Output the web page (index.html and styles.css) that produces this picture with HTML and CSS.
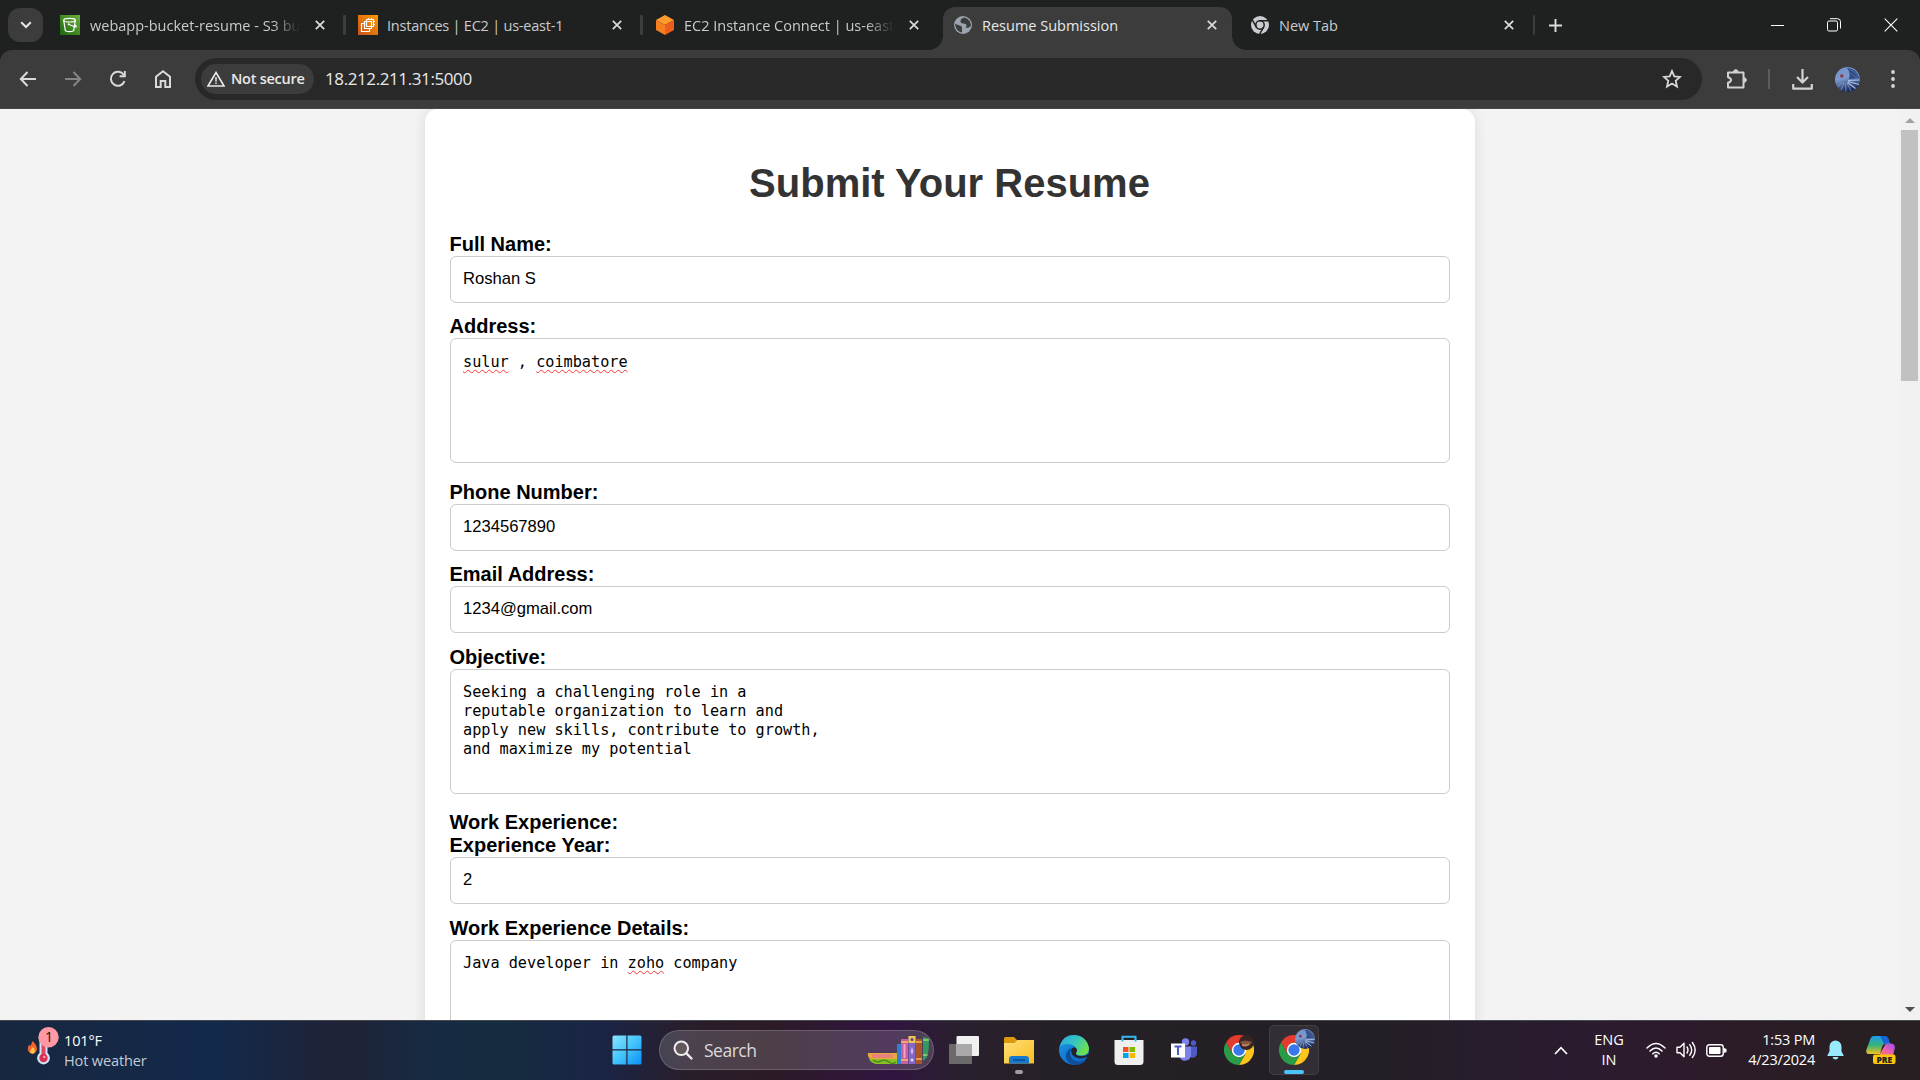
FILE: index.html
```html
<!DOCTYPE html>
<html lang="en">
<head>
<meta charset="utf-8">
<title>Resume Submission</title>
<link rel="stylesheet" href="styles.css">
</head>
<body>
<svg class="defs" width="0" height="0" aria-hidden="true">
  <defs>
    <symbol id="x" viewBox="0 0 10 10"><path d="M.8.8l8.4 8.4M9.200.8L.8 9.200" stroke="currentColor" stroke-width="1.7" fill="none"/></symbol>
    <linearGradient id="gGreen" x1="0" y1="1" x2="1" y2="0"><stop offset="0" stop-color="#1b660f"/><stop offset="1" stop-color="#6cae3e"/></linearGradient>
    <linearGradient id="gOrange" x1="0" y1="1" x2="1" y2="0"><stop offset="0" stop-color="#c8511b"/><stop offset="1" stop-color="#f90"/></linearGradient>
    <linearGradient id="gWin" x1="0" y1="0" x2="1" y2="1"><stop offset="0" stop-color="#8be5ff"/><stop offset=".5" stop-color="#43c4fb"/><stop offset="1" stop-color="#0a8ff5"/></linearGradient>
    <linearGradient id="gFolder" x1="0" y1="0" x2="1" y2="1"><stop offset="0" stop-color="#ffe07a"/><stop offset="1" stop-color="#f9bd1f"/></linearGradient>
    <linearGradient id="gEdgeTop" x1="0" y1="0" x2="1" y2=".5"><stop offset="0" stop-color="#2aa7e0"/><stop offset=".55" stop-color="#35c5c0"/><stop offset="1" stop-color="#6ce04e"/></linearGradient>
    <linearGradient id="gEdgeLeft" x1="0" y1="0" x2=".6" y2="1"><stop offset="0" stop-color="#1ba0e6"/><stop offset="1" stop-color="#0a66c8"/></linearGradient>
    <linearGradient id="gBird" x1="0" y1="0" x2=".3" y2="1"><stop offset="0" stop-color="#6f8fc4"/><stop offset=".5" stop-color="#7d9bd0"/><stop offset="1" stop-color="#1c2c5c"/></linearGradient>
    <linearGradient id="gPilotA" x1="0" y1="0" x2="0" y2="1"><stop offset="0" stop-color="#1c9df0"/><stop offset=".5" stop-color="#35b27c"/><stop offset="1" stop-color="#f2c21b"/></linearGradient>
    <linearGradient id="gPilotB" x1="1" y1="0" x2=".2" y2="1"><stop offset="0" stop-color="#9b4df0"/><stop offset=".6" stop-color="#f063a8"/><stop offset="1" stop-color="#f7834d"/></linearGradient>
    <symbol id="chrome" viewBox="0 0 30 30">
      <path d="M15 7.500h13A15 15 0 0 1 15 30l6.500-11.200z" fill="#fdc51c"/>
      <path d="M2 7.500A15 15 0 0 1 28 7.500H15L8.500 18.700z" fill="#e33b2e"/>
      <path d="M2 7.500L8.500 18.700 15 22.500l6.500-3.700L15 30A15 15 0 0 1 2 7.500z" fill="#2a9c48"/>
      <circle cx="15" cy="15" r="7.200" fill="#fff"/><circle cx="15" cy="15" r="5.700" fill="#3878ea"/>
    </symbol>
    <symbol id="bird" viewBox="0 0 25 25">
      <circle cx="12.500" cy="12.500" r="12.500" fill="url(#gBird)"/>
      <path d="M12 1a11.500 11.500 0 0 1 12 10l-10 1q2-6-2-11z" fill="#2e4a80"/>
      <path d="M14 2q7 3 9 8M15 6l7 5" stroke="#5577ae" stroke-width=".8" fill="none"/>
      <path d="M13 13.500l11.500-.5M13 14.500l11 3M12.500 15.500l8 6" stroke="#a9c2ea" stroke-width="1.100"/>
      <path d="M12 16l4 8M10.500 16.500l.5 8M9 16l-3 7M7.500 15.500l-5 4" stroke="#8ba6d6" stroke-width=".7"/>
      <circle cx="6.800" cy="9" r="1.700" fill="#8f3840"/>
    </symbol>
  </defs>
</svg>

<header class="tabstrip">
  <button class="tab-search"><svg width="12" height="8" viewBox="0 0 12 8"><path d="M1.200 1.200L6 6l4.800-4.800" fill="none" stroke="#e6e6e6" stroke-width="2"/></svg></button>
  <div class="tab tab-first">
    <svg class="fav" viewBox="0 0 20 20"><path fill="url(#gGreen)" d="M0 0h20v20H0z"/><g fill="none" stroke="#fff" stroke-width="1.200"><ellipse cx="9.500" cy="5.200" rx="5.800" ry="1.800"/><path d="M3.700 5.200l1.600 10.500q4.200 1.800 8.400 0l1.600-10.500M8.500 9.200l6 2.500q2.500.8 1.500-.8l-1.500-1.700"/></g><circle cx="8.700" cy="9.300" r="1" fill="#fff"/></svg>
    <span class="title fade">webapp-bucket-resume - S3 bu</span><svg class="close"><use href="#x"/></svg>
  </div>
  <i class="sep"></i>
  <div class="tab">
    <svg class="fav" viewBox="0 0 20 20"><path fill="url(#gOrange)" d="M0 0h20v20H0z"/><g fill="none" stroke="#fff" stroke-width="1.200"><rect x="8.500" y="4.500" width="7" height="7" rx=".5"/><path d="M6.500 8.500h-3v8h8v-3M6.500 6.500h7v7h-7zM10.500 4.500v-1.500M13.500 4.500v-1.500M15.500 6.500h1.500M15.500 9.500h1.500"/></g></svg>
    <span class="title tight">Instances | EC2 | us-east-1</span><svg class="close"><use href="#x"/></svg>
  </div>
  <i class="sep"></i>
  <div class="tab">
    <svg class="fav" viewBox="0 0 20 20"><path fill="#ff9a2e" d="M10 0l9 5-9 5-9-5z"/><path fill="#f57f20" d="M1 5l9 5v10l-9-5z"/><path fill="#ea5f1b" d="M19 5l-9 5v10l9-5z"/></svg>
    <span class="title fade">EC2 Instance Connect | us-east</span><svg class="close"><use href="#x"/></svg>
  </div>
  <div class="tab active">
    <svg class="fav" viewBox="0 0 20 20"><circle cx="10" cy="10" r="9" fill="#9aa3ae"/><path d="M11.500 2.500q-4 1-4 3.500t3 2.500 3 2-1 2.500q5 0 5.500-3-.5-5.500-6.500-7.500zM2 8.500q3 2 5 2t2 2.500 0 4.500q-6.500-1.500-7-9z" fill="#3c3c3c"/></svg>
    <span class="title">Resume Submission</span><svg class="close"><use href="#x"/></svg>
  </div>
  <div class="tab last">
    <svg class="fav" viewBox="0 0 20 20"><circle cx="10" cy="10" r="9" fill="#c9ccd0"/><circle cx="10" cy="10" r="4.200" fill="#c9ccd0" stroke="#1f2121" stroke-width="1.500"/><path d="M10 5.800h8.500M6.400 12.100L2.100 4.700M13.600 12.100L9.400 19.500" stroke="#1f2121" stroke-width="1.500"/></svg>
    <span class="title">New Tab</span><svg class="close"><use href="#x"/></svg>
  </div>
  <i class="sep sep-last"></i>
  <svg class="plus" width="13" height="13" viewBox="0 0 13 13"><path d="M6.500 0v13M0 6.500h13" stroke="#dcdcdc" stroke-width="1.900"/></svg>
  <div class="winctl">
    <svg width="13" height="13" viewBox="0 0 13 13"><path d="M0 6.500h13" stroke="#fff"/></svg>
    <svg width="14" height="14" viewBox="0 0 14 14" fill="none" stroke="#fff"><rect x=".5" y="3" width="10" height="10" rx="1.500"/><path d="M3 .7h7.500a3 3 0 0 1 3 3V10.500"/></svg>
    <svg width="14" height="14" viewBox="0 0 14 14"><path d="M.7.700l12.600 12.600M13.300.700L.7 13.300" stroke="#fff" stroke-width="1.100"/></svg>
  </div>
</header>

<nav class="toolbar">
  <svg class="nav" viewBox="0 0 20 20"><path d="M18 10H3M9.500 3L2.800 10l6.700 7" class="ln"/></svg>
  <svg class="nav dim" viewBox="0 0 20 20"><path d="M2 10h15M10.500 3l6.700 7-6.700 7" class="ln"/></svg>
  <svg class="nav" viewBox="0 0 20 20"><path d="M16.500 12.200A7 7 0 1 1 15.800 6" class="ln"/><path d="M17.800 2v6.200h-6.200V6.300h4.300V2z" fill="currentColor"/></svg>
  <svg class="nav" viewBox="0 0 20 20"><path d="M3 18V7.800L10 2.300l7 5.500V18h-4.700v-6H7.700v6z" class="ln"/></svg>
  <div class="omnibox">
    <div class="chip"><svg width="18" height="16" viewBox="0 0 18 16"><path d="M9 1.500L17 15H1z" fill="none" stroke="#e8e8e8" stroke-width="1.600"/><path d="M9 6v4.500M9 11.500v1.600" stroke="#e8e8e8" stroke-width="1.500"/></svg><span>Not secure</span></div>
    <span class="url">18.212.211.31:5000</span>
    <svg class="star" width="20" height="20" viewBox="0 0 20 20"><path d="M10 2l2.300 5.400 5.700.5-4.300 3.900 1.300 5.900-5-3.100-5 3.100 1.300-5.900L2 7.900l5.700-.5z" fill="none" stroke="#d8d8d8" stroke-width="1.800"/></svg>
  </div>
  <svg class="ext" width="22" height="22" viewBox="0 0 22 22"><path d="M2 4.500h15.500v15H2v-4.700q3-.8 3-2.800T2 9.200z" fill="none" stroke="currentColor" stroke-width="2" stroke-linejoin="round"/><path d="M7.500 4a2.300 2.300 0 0 1 4.600 0zM18 9.700a2.300 2.300 0 0 1 0 4.600z" fill="currentColor" stroke="currentColor"/></svg>
  <i class="tsep"></i>
  <svg class="dl" width="21" height="21" viewBox="0 0 21 21"><path d="M10.500 0v13M5 8l5.500 5.500L16 8M1.200 15v4.700h18.600V15" fill="none" stroke="currentColor" stroke-width="2.200" stroke-linejoin="round"/></svg>
  <svg class="avatar" width="25" height="25"><use href="#bird"/></svg>
  <svg class="dots" width="6" height="20" viewBox="0 0 6 20" fill="#d6d6d6"><circle cx="3" cy="3" r="1.900"/><circle cx="3" cy="10" r="1.900"/><circle cx="3" cy="17" r="1.900"/></svg>
</nav>

<main class="viewport">
  <div class="page">
    <form class="card">
      <h1>Submit Your Resume</h1>
      <label>Full Name:</label>
      <div class="input">Roshan S</div>
      <label>Address:</label>
      <div class="area"><span class="typo">sulur</span> , <span class="typo">coimbatore</span></div>
      <label>Phone Number:</label>
      <div class="input">1234567890</div>
      <label>Email Address:</label>
      <div class="input">1234@gmail.com</div>
      <label>Objective:</label>
      <div class="area">Seeking a challenging role in a
reputable organization to learn and
apply new skills, contribute to growth,
and maximize my potential</div>
      <label>Work Experience:</label>
      <label>Experience Year:</label>
      <div class="input">2</div>
      <label>Work Experience Details:</label>
      <div class="area">Java developer in <span class="typo">zoho</span> company</div>
    </form>
  </div>
  <div class="scrollbar">
    <svg width="10" height="5" viewBox="0 0 10 5"><path d="M0 5l5-5 5 5z" fill="#a3a3a3"/></svg>
    <div class="thumb"></div>
    <svg class="down" width="10" height="5" viewBox="0 0 10 5"><path d="M0 0l5 5 5-5z" fill="#505050"/></svg>
  </div>
</main>

<footer class="taskbar">
  <div class="weather">
    <svg width="34" height="42" viewBox="0 0 34 42">
      <path d="M5.500 14q4.500 4 4.500 8a4.600 4.600 0 0 1-9.200 0q0-3 1.500-4.500l.8 1.800q1.500-2 2.400-5.300z" fill="#f0642f"/><path d="M6 20q2.200 2 1.800 4.500a2.300 2.300 0 0 1-4.600 0q.3-2.500 2.800-4.500z" fill="#ffc54a"/>
      <path d="M12.500 10h8v16a6.400 6.400 0 1 1-8 0z" fill="#cfe4fa"/><path d="M14.500 10h4v18h-4z" fill="#e24862"/><circle cx="16.500" cy="31" r="4.200" fill="#d92f50"/><circle cx="17.300" cy="30" r="1.200" fill="#f6a5b4"/>
      <circle cx="21.500" cy="10.200" r="10.200" fill="#ff99a4"/>
      <text x="22" y="15.300" text-anchor="middle" class="badge">1</text>
    </svg>
    <div class="wtext"><div>101°F</div><div class="w2">Hot weather</div></div>
  </div>
  <div class="apps">
    <div class="app start"><svg width="30" height="30" viewBox="0 0 30 30"><path fill="url(#gWin)" d="M2 .5h12.300v13.800H.5V2A1.500 1.500 0 0 1 2 .5zm13.500 0H28A1.500 1.500 0 0 1 29.500 2v12.300h-14zM.5 15.500h13.800v14H2A1.500 1.500 0 0 1 .5 28zm15 0h14V28a1.500 1.500 0 0 1-1.500 1.500H15.500z"/></svg></div>
    <div class="search">
      <svg width="20" height="20" viewBox="0 0 20 20"><circle cx="8.300" cy="8.300" r="6.800" fill="#63575e" stroke="#eee" stroke-width="2"/><path d="M13.200 13.200l5.300 5.300" stroke="#eee" stroke-width="2.400" stroke-linecap="round"/></svg>
      <span>Search</span>
      <svg class="books" width="63" height="30" viewBox="0 0 63 30">
        <path d="M1 18h29v6H3q-3-3-2-6z" fill="#e9a63a"/><rect x="5" y="19" width="21" height="4" rx="1.500" fill="#e8847c"/><path d="M2 24h28v5H9q-5-1-7-5z" fill="#8abf25"/><path d="M6 25q4 3 8 1t8 1 7 0" stroke="#4e8a1c" stroke-width="1.500" fill="none"/>
        <rect x="30" y="9" width="4" height="20" fill="#2f7fd0"/><rect x="34" y="4" width="7" height="25" fill="#cd5c9d"/><path d="M34 7h7M34 25h7" stroke="#f1c25c" stroke-width="1.500"/><path d="M37.500 9v14" stroke="#f0a0cc" stroke-width="2"/>
        <rect x="41.500" y="1" width="7" height="28" fill="#8465c9"/><rect x="41.500" y="1" width="7" height="7" fill="#f1c44b"/><circle cx="45" cy="4.500" r="1.500" fill="#6243a4"/><path d="M45 12l1.500 4-1.500 4-1.500-4z" fill="#cbbaf4"/><circle cx="45" cy="25" r="1.500" fill="#e2d8fa"/>
        <rect x="49" y="4" width="6" height="25" fill="#a8552a"/><path d="M49 7h6M49 24h6" stroke="#f0b55a" stroke-width="1.500"/><path d="M56 2l5.500 1q1.500 11-2 20L56 26z" fill="#349862"/><path d="M56 5h6M56 20h4.500" stroke="#a3cf77" stroke-width="1.500"/>
      </svg>
    </div>
    <div class="app gap"><svg width="30" height="30" viewBox="0 0 30 30"><rect x="0" y="9" width="23" height="20" rx="1" fill="#6c696b"/><rect x="7.500" y="1" width="22.500" height="20" rx="1" fill="#f0f0f0"/><path d="M7.500 9H23v12H7.500z" fill="#aaa8a9"/></svg></div>
    <div class="app"><svg width="30" height="30" viewBox="0 0 30 30"><path d="M0 3.500A1.500 1.500 0 0 1 1.500 2h8.500l3 3H28.500A1.500 1.500 0 0 1 30 6.500V12H0z" fill="#dd9a0c"/><path d="M0 8h10.500l3-3H30V28.500H0z" fill="url(#gFolder)"/><path d="M5 28.500V24a3 3 0 0 1 3-3h14a3 3 0 0 1 3 3v4.500z" fill="#1479cf"/><path d="M9 25h12" stroke="#0a4a91" stroke-width="1.500"/></svg><i class="dot"></i></div>
    <div class="app"><svg width="30" height="30" viewBox="0 0 30 30"><circle cx="15" cy="15" r="15" fill="url(#gEdgeLeft)"/><path d="M11 17Q11 28 23 26.500q3-.5 4.500-1.500Q22.500 30.500 15 30 6 27 7 19.500q1-5 5-6.500z" fill="#114d98"/><path d="M1 11Q4 0 15 0q13 1 15 13.500 0 7-8 7-6 0-5-3 1.500-1.500.5-4Q14.500 9 9 9q-5 0-8 2z" fill="url(#gEdgeTop)"/><path d="M12 16q0-3 3-3.800 3 .5 3 3.600-1 1.700-1 3.200.8 2.200 6 2.200 3 0 6.500-2.200l.5 1q-2 3-2.500 2-5 2.500-9.500.8Q12.500 21 12 16z" fill="#27202a"/></svg></div>
    <div class="app"><svg width="30" height="30" viewBox="0 0 30 30"><path d="M8.500 7V1.800h13V7" fill="none" stroke="#35b8ef" stroke-width="2"/><path d="M.5 5h29v21.500a3.500 3.500 0 0 1-3.500 3.500H4a3.500 3.500 0 0 1-3.500-3.500z" fill="#efefef"/><path d="M8.500 6.500V4.500M21.500 6.500V4.500" stroke="#35b8ef" stroke-width="2"/><path fill="#f05022" d="M9 12h5.500v5H9z"/><path fill="#7fb900" d="M15.500 12H21v5h-5.500z"/><path fill="#00a3ee" d="M9 18h5.500v5H9z"/><path fill="#fdb900" d="M15.500 18H21v5h-5.500z"/></svg></div>
    <div class="app"><svg width="30" height="30" viewBox="0 0 30 30"><circle cx="24.500" cy="8" r="2.700" fill="#5059c9"/><path d="M20 11.500h8V18a4.500 4.500 0 0 1-8 3z" fill="#4f58c4"/><circle cx="16.500" cy="7" r="3.700" fill="#7b83eb"/><path d="M10.500 11.500h11.500V20a6 6 0 0 1-11.500 2z" fill="#7b83eb"/><rect x="2" y="8.500" width="14" height="14" fill="#fff"/><path d="M5.500 11.500h7M9 11.500V20" stroke="#5059c9" stroke-width="2"/></svg></div>
    <div class="app"><svg width="30" height="30" viewBox="0 0 30 30"><use href="#chrome"/><circle cx="22.500" cy="7.500" r="7.500" fill="#362521"/><path d="M16 7q5-3 12 0-3 5-8 5z" fill="#825442"/><path d="M18 10q4 1 7-1" stroke="#d29165" stroke-width="1.500" fill="none"/></svg></div>
    <div class="app current"><svg width="36" height="36" viewBox="0 0 36 36"><use href="#chrome" x="0" y="6" width="30" height="30"/><use href="#bird" x="16" y="0" width="20" height="20"/></svg><i class="bar"></i></div>
  </div>
  <div class="tray">
    <svg width="14" height="9" viewBox="0 0 14 9"><path d="M1 8l6-6.300L13 8" fill="none" stroke="#fff" stroke-width="1.700"/></svg>
    <div class="lang">ENG<br>IN</div>
    <svg class="wifi" width="20" height="16" viewBox="0 0 20 16" fill="none" stroke="#fff" stroke-width="1.500" stroke-linecap="round"><path d="M1 6q9-9 18 0M4 9q6-6 12 0M6.800 11.800q3.200-3 6.400 0"/><circle cx="10" cy="14" r="1" fill="#fff"/></svg>
    <svg class="vol" width="20" height="18" viewBox="0 0 20 18" fill="none" stroke="#fff" stroke-width="1.400" stroke-linecap="round" stroke-linejoin="round"><path d="M1 6.300h3l4-4v13.400l-4-4H1zM11 6q2 3 0 6M13.700 3.700q4 5.300 0 10.600M16.400 1.500q5.500 7.500 0 15"/></svg>
    <svg class="bat" width="21" height="13" viewBox="0 0 21 13"><rect x=".8" y=".8" width="16.400" height="11.400" rx="2.500" fill="none" stroke="#fff" stroke-width="1.400"/><rect x="3" y="3" width="11.500" height="7" rx=".8" fill="#fff"/><path d="M18 4l2.500 1v3L18 9z" fill="#fff"/></svg>
    <div class="clock">1:53 PM<br>4/23/2024</div>
    <svg class="bell" width="17" height="20" viewBox="0 0 17 20"><path d="M8.500.5a6 6 0 0 1 6 6v5l2 3.500v1H.5v-1l2-3.500v-5a6 6 0 0 1 6-6zM5.500 17h6q-.7 2.500-3 2.500T5.500 17z" fill="#9aeaff"/></svg>
    <svg class="pilot" width="30" height="30" viewBox="0 0 30 30"><path d="M8 1h11q3 .5 4 5l1 3h-5q-2 0-3 3l-2 7H2q-3-1-1-6l3-8q1-4 4-4z" fill="url(#gPilotA)"/><path d="M14 1h5q3 .5 4 5l1 3h-6z" fill="#1764dc"/><path d="M20 8.500h5q5 .5 3.500 6l-2 8H14q-1-2 0-4z" fill="url(#gPilotB)"/><rect x="7" y="19.500" width="22.500" height="9.500" rx="2" fill="#fcc60a"/><text x="18.300" y="27.500" text-anchor="middle" class="pre">PRE</text></svg>
  </div>
</footer>
</body>
</html>
```
FILE: styles.css
```css
* { box-sizing: border-box; }
html, body { height: 100%; }
body {
  margin: 0;
  display: flex;
  flex-direction: column;
  overflow: hidden;
  font-family: "Open Sans", "Noto Sans", sans-serif;
  background: #1f2121;
}
svg { display: block; flex: none; }
.defs { position: absolute; }

/* Tab strip */
.tabstrip { height: 50px; flex: none; display: flex; align-items: center; padding-left: 8px; background: #1f2121; color: #c9cbcb; }
.tab-search { width: 35px; height: 34px; border: 0; border-radius: 12px; background: #3c3c3c; display: grid; place-items: center; padding: 0; flex: none; }
.tab { flex: none; width: 294px; height: 100%; display: flex; align-items: center; padding-left: 12px; font-size: 14.5px; font-weight: 600; }
.tab-first { width: 300px; padding-left: 17px; }
.fav { width: 20px; height: 20px; margin-right: 9px; }
.tab-first .fav { margin-right: 10px; }
.title { width: 210px; margin-right: 15px; overflow: hidden; white-space: nowrap; flex: none; font-weight: 500; line-height: 22px; padding-top: 1px; }
.tight { letter-spacing: -.22px; }
.fade { mask-image: linear-gradient(90deg, #000 calc(100% - 28px), transparent); }
.close { width: 10px; height: 10px; color: #dcdcdc; }
.sep { width: 3px; height: 20px; background: #3c3d3e; border-radius: 1px; flex: none; }
.active { position: relative; width: 289px; height: 43px; align-self: flex-end; margin-left: 6px; padding: 0 0 7px 10px; background: #3c3c3c; border-radius: 12px 12px 0 0; color: #e8e8e8; }
.active::before, .active::after { content: ""; position: absolute; bottom: 0; width: 14px; height: 14px; }
.active::before { right: 100%; background: radial-gradient(circle at 0 0, transparent 13.5px, #3c3c3c 14px); }
.active::after { left: 100%; background: radial-gradient(circle at 100% 0, transparent 13.5px, #3c3c3c 14px); }
.last { width: 300px; padding-left: 18px; }
.sep-last { width: 2px; margin-left: 1px; }
.plus { margin-left: 14px; }
.winctl { margin-left: auto; margin-right: 22px; display: flex; gap: 43px; align-items: center; }

/* Toolbar */
.toolbar { height: 59px; flex: none; display: flex; align-items: center; padding-left: 18px; background: #3c3c3c; border-bottom: 1px solid #4a4646; border-radius: 12px 12px 0 0; color: #d2d2d2; }
.nav { width: 20px; height: 20px; margin-right: 25px; color: #dadada; }
.nav.dim { color: #858585; }
.ln { fill: none; stroke: currentColor; stroke-width: 2; }
.omnibox { width: 1507px; height: 42px; border-radius: 21px; background: #282828; display: flex; align-items: center; padding: 0 20px 0 6px; margin-left: -3px; flex: none; }
.chip { width: 113px; height: 30px; border-radius: 15px; background: #3c3c3c; display: flex; align-items: center; gap: 6px; padding-left: 6px; color: #e8e8e8; font-size: 14.5px; font-weight: 600; white-space: nowrap; letter-spacing: -.25px; }
.url { margin-left: 11px; font-size: 17px; color: #e8e8e8; letter-spacing: -.4px; }
.chip span, .url { position: relative; top: -1px; }
.star { margin-left: auto; }
.ext { margin-left: 24px; }
.tsep { width: 2px; height: 20px; background: #5e5e5e; margin-left: 20px; }
.dl { margin-left: 22px; }
.avatar { margin-left: 22px; }
.dots { margin-left: 30px; }

/* Page */
.viewport { flex: 1; min-height: 0; display: flex; background: #f3f3f3; overflow: hidden; }
.page { flex: 1; overflow: hidden; font-family: "Liberation Sans", Arial, sans-serif; }
.card { width: 1050px; height: 1600px; margin: 0 auto; padding: 25px; background: #fff; border-radius: 12.5px; box-shadow: 0 0 12.5px rgba(0, 0, 0, .1); }
h1 { margin: 25px 0 26px; font-size: 40px; line-height: 48px; text-align: center; color: #333; }
label { display: block; height: 23px; font-size: 20px; line-height: 23px; font-weight: bold; color: #000; }
.input, .area { border: 1px solid #ccc; border-radius: 6px; padding: 12px 12.5px; color: #000; font-size: 16.6px; line-height: 19px; }
.input { height: 47px; margin-bottom: 12.4px; }
.area { height: 125px; margin-bottom: 17.6px; padding-top: 13.2px; font-family: "DejaVu Sans Mono", monospace; font-size: 15.2px; white-space: pre; }
.typo { text-decoration: underline wavy #f33 1px; text-underline-offset: 2px; text-decoration-skip-ink: none; }
.scrollbar { width: 21px; flex: none; background: #f1f1f1; display: flex; flex-direction: column; align-items: center; padding: 9px 0 8px; }
.thumb { width: 17px; height: 251px; margin-top: 7px; background: #c1c1c1; }
.down { margin-top: auto; }

/* Taskbar */
.taskbar {
  height: 60px; flex: none; display: flex; align-items: center; border-top: 1px solid #46494f; color: #fff;
  background: linear-gradient(90deg, #17273f 0, #13294b 220px, #1f2235 345px, #172a42 420px, #152c3f 500px, #1a2445 600px, #291e2b 690px, #2c1b26 770px, #311541 890px, #29202d 960px, #242025 1090px, #241f26 1380px, #2a1c30 1560px, #2d1b2b 1680px, #281f23 1850px);
}
.weather { width: 600px; display: flex; padding-left: 27px; flex: none; }
.weather svg { margin-top: -4px; }
.badge { font-size: 14px; fill: #111; }
.wtext { font-size: 14.5px; line-height: 20px; margin-left: 3px; letter-spacing: -.12px; }
.w2 { color: #c3cad5; }
.apps { display: flex; align-items: center; flex: none; margin-top: -1px; }
.app { width: 55px; height: 50px; display: grid; place-items: center; position: relative; flex: none; }
.start svg { margin-left: -1px; }
.app.gap { margin-left: 2.5px; }
.search { width: 275px; height: 40px; border-radius: 20px; margin-left: 4px; display: flex; align-items: center; padding: 0 3px 0 13px; background: rgba(255, 255, 255, .16); border: 1px solid rgba(255, 255, 255, .17); font-size: 17.5px; color: #dcd8dc; }
.search span { margin-left: 11px; letter-spacing: -.5px; }
.books { margin-left: auto; }
.dot, .bar { position: absolute; bottom: 1px; height: 4px; border-radius: 2px; }
.dot { width: 8px; left: 23px; background: #a09ea2; }
.bar { width: 20px; left: 15px; background: #4cc2ff; }
.current { width: 50px; margin-left: 2.5px; background: rgba(255, 255, 255, .07); border: 1px solid rgba(255, 255, 255, .08); border-radius: 5px; }
.current svg { margin: -7px 0 0 6px; }
.current .bar { bottom: 0; left: 14px; }
.tray { margin-left: auto; display: flex; align-items: center; font-size: 14.5px; line-height: 20px; padding-right: 24px; margin-top: -1px; }
.lang { width: 50px; margin-left: 16px; text-align: center; }
.wifi { margin-left: 12px; }
.vol { margin-left: 10px; }
.bat { margin-left: 10px; }
.clock { width: 88px; text-align: right; letter-spacing: -.2px; }
.bell { margin-left: 12px; }
.pilot { margin-left: 22px; }
.pre { font: 800 8.500px "Open Sans", sans-serif; fill: #222; }
```
